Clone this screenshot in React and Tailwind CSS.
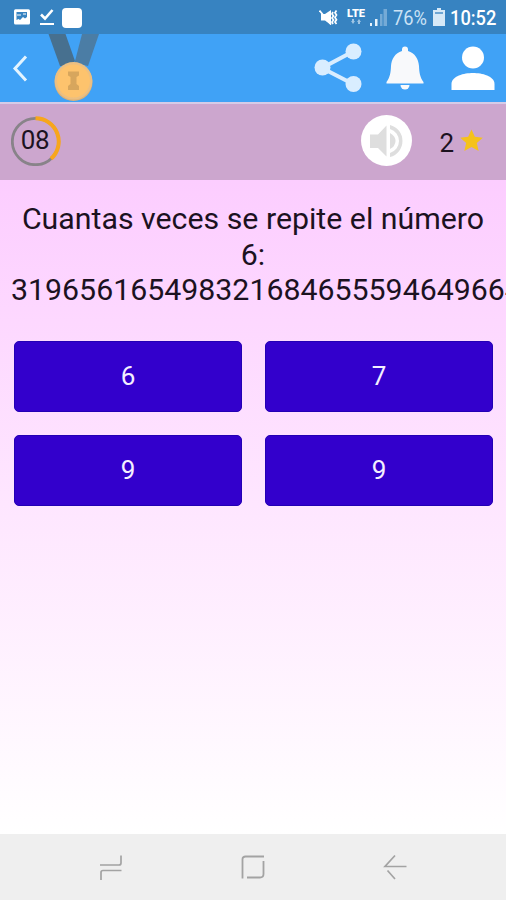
import React, { useState } from 'react';

const answers = ['6', '7', '9', '9'];

const StatusBar = () => (
  <div className="flex h-[34px] shrink-0 items-center bg-[#3783c1] text-white">
    <svg className="ml-[14px] h-[16px] w-[16px]" viewBox="0 0 16 16">
      <rect x="0" y="0.3" width="16" height="15.2" rx="1.5" fill="#fff" />
      <path d="M2.500 3H13V8L11 9.500L9 8L6 11L4.500 10L2.500 11Z" fill="#3783c1" />
      <path d="M3 6h4M9 5h3" stroke="#fff" strokeWidth="1" />
    </svg>
    <svg className="ml-[9px] h-[18px] w-[16px]" viewBox="0 0 16 18" fill="none" stroke="#fff">
      <path d="M2 6.500L6 10.500L13.500 2" strokeWidth="2.600" />
      <path d="M1 16h14" strokeWidth="2" />
    </svg>
    <div className="ml-[7px] mt-[1px] h-[20px] w-[20px] rounded-[4px] bg-white" />

    <svg className="ml-auto h-[18px] w-[20px]" viewBox="0 0 20 18" fill="none" stroke="#fff">
      <path d="M2 6H6L12 2V17L6 12.500H2Z" fill="#fff" stroke="none" />
      <path d="M0.500 2.500L12 16.500" strokeWidth="1.800" />
      <path d="M14 4l-1 2l1.500 2l-1.500 2l1.500 2l-1.500 2l1 2M17.500 2.500l-1.500 2.300l1.500 2.300l-1.500 2.300l1.500 2.300l-1.500 2.300l1.500 2" strokeWidth="1.700" />
    </svg>
    <div className="ml-[7px] flex h-[18px] w-[20px] flex-col items-center">
      <span className="block text-[11px] leading-[11px] font-black">LTE</span>
      <svg className="h-[5px] w-[10px]" viewBox="0 0 10 5" fill="#9fc5e5">
        <path d="M0 2h4L2 5ZM3 0v2H1V0ZM6 3h4L8 0ZM7 3h2v2H7Z" />
      </svg>
    </div>
    <svg className="ml-[4px] h-[17px] w-[17px]" viewBox="0 0 17 17">
      <path d="M0 14h2v3H0ZM5 10h2.500v7H5Z" fill="#e8f3fc" />
      <path d="M10 5h2.500v12H10ZM13.500 0H17v17h-3.500Z" fill="#75aad6" />
    </svg>
    <span className="mt-[2px] ml-[6px] block w-[35px] origin-left scale-x-[0.870] text-[21px] leading-[24px] whitespace-nowrap text-[#cbe2f5]">76%</span>
    <svg className="ml-[5px] h-[18px] w-[12px]" viewBox="0 0 12 18">
      <path d="M4 0h4v2h4v16H0V2h4Z" fill="#d7e9f7" />
      <path d="M2 4h8v2H2Z" fill="#6fa6d3" />
    </svg>
    <span className="mt-[2px] mr-[8px] ml-[5px] block w-[48px] origin-left scale-x-[0.870] text-[21px] leading-[24px] font-medium whitespace-nowrap">10:52</span>
  </div>
);

const Header = () => (
  <header className="flex h-[70px] shrink-0 border-b-2 border-[#d5cbe7] bg-[#40a2f6]">
    <svg className="mt-[21px] ml-[12px] h-[27px] w-[16px]" viewBox="0 0 16 27" fill="none" stroke="#e3f4ff" strokeWidth="3">
      <path d="M14 1.500L3 13.500L14 25.500" />
    </svg>
    <svg className="ml-[20px] h-[68px] w-[52px]" viewBox="0 0 52 68">
      <path d="M26.500 29L34 0H51L40 32Z" fill="#4b7da5" />
      <path d="M0.500 0H17.500L27 27L22 32H12Z" fill="#47708f" />
      <circle cx="25.500" cy="48" r="19" fill="#dfb276" />
      <circle cx="25.500" cy="46.800" r="18.800" fill="#ebbf82" />
      <circle cx="25.500" cy="47" r="16.500" fill="#fdc36d" />
      <path d="M20 37.500H31V41.500L28.500 43V50L31 52V56H20V52L22.500 50V43L20 41.500Z" fill="#d7a65d" />
    </svg>
    <div className="ml-auto flex">
      <svg className="mt-[9px] h-[49px] w-[48px]" viewBox="0 0 48 49">
        <path d="M39 8.500L8 25L39 41" fill="none" stroke="#d9edff" strokeWidth="4" />
        <g fill="#d9edff">
          <circle cx="39.500" cy="8.500" r="8" />
          <circle cx="8.500" cy="24.500" r="8" />
          <circle cx="39.500" cy="41" r="8" />
        </g>
      </svg>
      <svg className="mt-[12px] ml-[24px] h-[45px] w-[38px]" viewBox="0 0 38 45" fill="#f8f9fb">
        <path d="M16 3.500A3 3 0 0 1 22 3.500V5C29 7 32.500 13 33 20C33.300 27 34 31 37.500 36V37.500H0.500V36C4 31 4.700 27 5 20C5.500 13 9 7 16 5Z" />
        <path d="M14.500 39H23.500A4.500 4.500 0 0 1 14.500 39Z" />
      </svg>
      <svg className="mt-[12px] mr-[11px] ml-[27px] h-[45px] w-[44px]" viewBox="0 0 44 45" fill="#fff">
        <circle cx="22" cy="11.500" r="11" />
        <path d="M0.500 44V38C0.500 30 13 27 22 27S43.500 30 43.500 38V44Z" />
      </svg>
    </div>
  </header>
);

const ScoreBar = ({ seconds, score }) => (
  <div className="flex h-[76px] shrink-0 items-center bg-[#cca6ce] pb-[3px] text-[26px] leading-[30px]">
    <div className="ml-[11px] grid h-[50px] w-[50px] place-items-center">
      <svg className="col-start-1 row-start-1 h-[50px] w-[50px]" viewBox="0 0 50 50" fill="none">
        <circle cx="24.500" cy="25.500" r="23.200" stroke="#888389" strokeWidth="2.800" />
        <path d="M24.500 2.300A23.200 23.200 0 0 1 40 42.800" stroke="#f7a61c" strokeWidth="4" />
      </svg>
      <span className="col-start-1 row-start-1 -mt-px -ml-[2px] tracking-[-0.400px]">{seconds}</span>
    </div>
    <div className="ml-auto flex h-[51px] w-[51px] items-center justify-center rounded-full bg-white">
      <svg className="h-[36px] w-[36px]" viewBox="0 0 36 36">
        <path d="M1 11.500H9L17.500 2.500V33.500L9 25H1Z" fill="#dedede" />
        <path d="M21 2A16.500 16.500 0 0 1 21 34V30A12.500 12.500 0 0 0 21 6Z" fill="#dedede" />
        <path d="M21 10Q26.500 13 26.500 18T21 26Z" fill="#dedede" />
      </svg>
    </div>
    <span className="mt-[4px] ml-[27px]">{score}</span>
    <svg className="mr-[23px] ml-[6px] h-[23px] w-[23px]" viewBox="0 0 24 24">
      <path d="M12 0.500L15.500 8.200L23.800 9L17.500 14.500L19.500 23L12 18.700L4.500 23L6.500 14.500L0.200 9L8.500 8.200Z" fill="#f5c21b" />
    </svg>
  </div>
);

const NavBar = () => (
  <nav className="grid h-[66px] shrink-0 grid-cols-[111px_142px_142px_111px] bg-[#efefef]">
    <div className="flex items-center justify-end">
      <svg className="-mr-[12px] h-[26px] w-[24px]" viewBox="0 0 24 26" fill="none" stroke="#a3a3a3" strokeWidth="1.700">
        <path d="M1 11H20Q22 11 22 9V1.500M22.500 16.500H4Q2 16.500 2 18.500V26" />
      </svg>
    </div>
    <div className="flex items-center justify-end">
      <svg className="-mr-[13px] h-[26px] w-[26px]" viewBox="0 0 26 26" fill="none" stroke="#a3a3a3" strokeWidth="1.800">
        <path d="M2.500 24.500V5Q2.500 2.500 5.500 2.500H24M23.500 7V20Q23.500 23.500 20 23.500H7" />
      </svg>
    </div>
    <div className="flex items-center justify-end">
      <svg className="-mr-[12px] h-[26px] w-[24px]" viewBox="0 0 24 26" fill="none" stroke="#a3a3a3" strokeWidth="1.700">
        <path d="M12 1.500L2 12.500H23.500M4.500 16.500L12 25" />
      </svg>
    </div>
  </nav>
);

const App = () => {
  const [selected, setSelected] = useState(null);

  return (
    <div className="flex h-[900px] w-[506px] flex-col overflow-hidden font-['Roboto',sans-serif] text-[#1c121f]">
      <StatusBar />
      <Header />
      <ScoreBar seconds="08" score={2} />
      <main className="min-h-0 flex-1 bg-linear-to-b from-[#fccdff] to-white px-[11px] pt-[21px]">
        <h1 className="text-center text-[30.300px] leading-[35.500px]">
          Cuantas veces se repite el número 6: 319656165498321684655594649664
        </h1>
        <div className="mt-[33px] grid grid-cols-2 gap-x-[23px] gap-y-[23px] pr-[2px] pl-[3px]">
          {answers.map((answer, i) => (
            <button
              key={i}
              type="button"
              aria-pressed={selected === i}
              onClick={() => setSelected(i)}
              className="h-[71px] rounded-[5px] border border-[#2300b4] bg-[#3300cc] text-[26px] leading-[30px] text-[#f4efff]"
            >
              {answer}
            </button>
          ))}
        </div>
      </main>
      <NavBar />
    </div>
  );
};

export default App;
